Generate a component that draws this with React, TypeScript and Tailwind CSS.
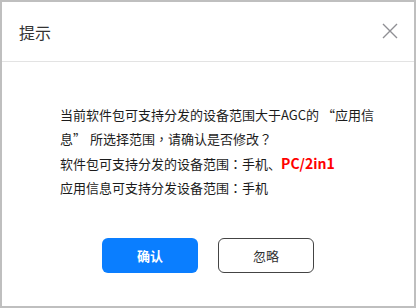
import React from 'react';

const font = { fontFamily: '"Noto Sans CJK SC", "Liberation Sans", sans-serif' };

// centered full-width punctuation, as in the reference
const P = ({ children }: { children: React.ReactNode }) => (
  <span lang="zh-TW" className="font-['Noto_Sans_CJK_TC']">{children}</span>
);

export default function App() {
  return (
    <div
      lang="zh-CN"
      className="w-[416px] h-[308px] border-2 border-[#bfbfbf] bg-white flex flex-col"
      style={font}
    >
      <div className="h-[60px] flex items-center justify-between pl-[17px] pr-[16px] border-b border-[#e3e3e3]">
        <span className="text-[16px] text-[#333333]">提示</span>
        <svg width="16" height="16" viewBox="0 0 16 16" className="mt-[-2px]">
          <path d="M1 1 L15 15 M15 1 L1 15" stroke="#8f8f94" strokeWidth="1.4" />
        </svg>
      </div>
      <div className="pt-[41px] pl-[58px] pr-[30px] text-[13px] leading-[24px] text-[#1c1c1c]">
        <div className="whitespace-nowrap">
          当前软件包可支持分发的设备范围大于AGC的<span className="ml-[3px]">“</span>应用信
        </div>
        <div className="whitespace-nowrap">
          息<span className="mr-[4px]">”</span>所选择范围<P>，</P>请确认是否修改<P>？</P>
        </div>
        <div className="whitespace-nowrap">
          软件包可支持分发的设备范围<P>：</P>手机、
          <span className="text-[#ff0000] font-bold text-[14px]">PC/2in1</span>
        </div>
        <div className="whitespace-nowrap">
          应用信息可支持分发设备范围<P>：</P>手机
        </div>
      </div>
      <div className="flex justify-center gap-[20px] mt-[38px]">
        <button className="w-[96px] h-[35px] rounded-[6px] bg-[#0a7eff] text-white text-[13px] font-bold">
          确认
        </button>
        <button className="w-[96px] h-[35px] rounded-[6px] border border-[#444444] bg-white text-[#333333] text-[13px]">
          忽略
        </button>
      </div>
    </div>
  );
}
